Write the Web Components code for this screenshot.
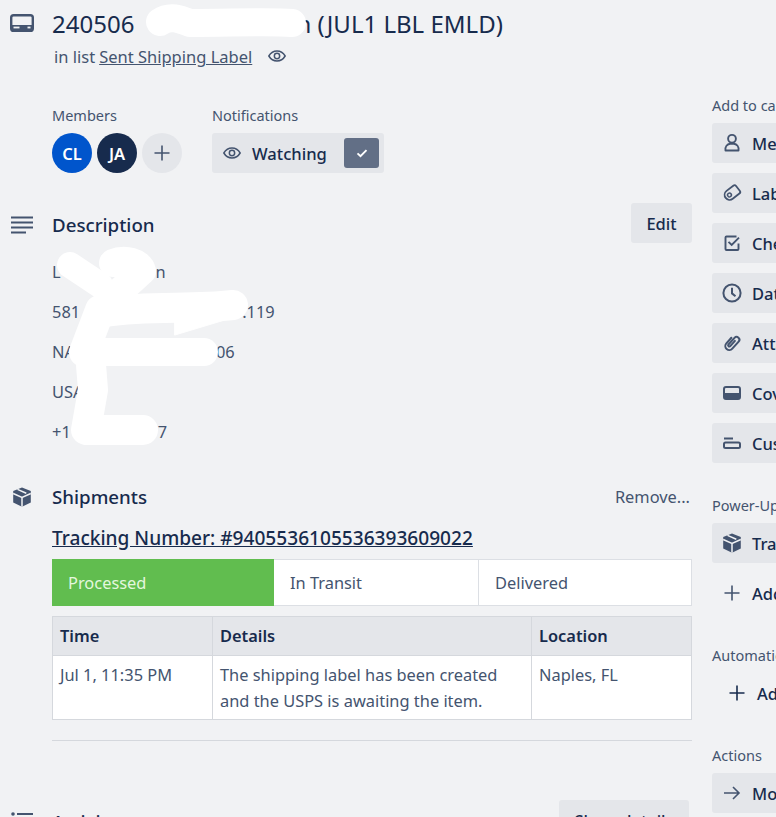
<!DOCTYPE html>
<html><head><meta charset="utf-8">
<style>
html,body{margin:0;padding:0;width:776px;height:817px;overflow:hidden;background:#f1f2f4;}
body{font-family:"Noto Sans","Open Sans","Liberation Sans",sans-serif;color:#172b4d;}
desc-block p{margin:0 0 20px;white-space:pre}
desc-block i{display:inline-block;width:var(--w)}
</style></head>
<body>
<card-window>
  <card-header slot="main"></card-header>
  <member-row slot="main"></member-row>
  <card-section slot="main" icon="lines" heading="Description" action="Edit" kind="button" style="--top:30px">
    <desc-block>
      <p>L<i style="--w:95px"></i>n</p>
      <p>581<i style="--w:162px"></i>.119</p>
      <p>NA<i style="--w:141px"></i>06</p>
      <p>USA</p>
      <p>+1<i style="--w:87px"></i>7</p>
    </desc-block>
  </card-section>
  <card-section slot="main" icon="box" heading="Shipments" action="Remove..." kind="text" style="--top:33px">
    <shipment-panel></shipment-panel>
  </card-section>
  <card-section slot="main" icon="activity" heading="Activity" action="Show details" kind="button" style="--top:59px;--bw:130px;--ar:3px"></card-section>

  <side-group slot="side" label="Add to card" style="--first:95px">
    <side-button icon="person">Members</side-button>
    <side-button icon="tag">Labels</side-button>
    <side-button icon="check">Checklist</side-button>
    <side-button icon="clock">Dates</side-button>
    <side-button icon="clip">Attachment</side-button>
    <side-button icon="cover">Cover</side-button>
    <side-button icon="field">Custom Fields</side-button>
  </side-group>
  <side-group slot="side" label="Power-Ups">
    <side-button icon="box">Tracking</side-button>
    <side-button icon="plus" plain>Add Power-Ups</side-button>
  </side-group>
  <side-group slot="side" label="Automation">
    <side-button icon="plus" plain indent>Add button</side-button>
  </side-group>
  <side-group slot="side" label="Actions">
    <side-button icon="arrow">Move</side-button>
  </side-group>
</card-window>
<redact-marks></redact-marks>

<script>
const ICONS={
  card:'<rect x="1.200" y="5.200" width="21.600" height="15.600" rx="2.400" fill="none" stroke="currentColor" stroke-width="2.400"/><path d="M2 15h20v4a2 2 0 0 1-2 2H4a2 2 0 0 1-2-2z" fill="currentColor"/><rect x="3.500" y="16.600" width="6" height="1.800" fill="#f1f2f4"/><rect x="17.500" y="16.600" width="3" height="1.800" fill="#f1f2f4"/>',
  eye:'<path d="M12 6C7.500 6 4 9 2.200 12 4 15 7.500 18 12 18s8-3 9.800-6C20 9 16.500 6 12 6z" fill="none" stroke="currentColor" stroke-width="1.800" stroke-linejoin="round"/><circle cx="12" cy="12" r="3.200" fill="none" stroke="currentColor" stroke-width="1.800"/>',
  plus:'<path d="M12 4.500v15M4.500 12h15" stroke="currentColor" stroke-width="1.600" fill="none"/>',
  lines:'<path d="M1 4.500h22M1 9.500h22M1 14.500h22M1 19.500h15" stroke="currentColor" stroke-width="2.200" fill="none"/>',
  box:'<path d="M12 2.500l8.800 3.400v11.600L12 21.800 3.200 17.500V6z" fill="currentColor"/><path d="M3.200 8.500l8.800 4 8.800-4M12 12.500v9.300M7.500 4.400l8.800 3.800" stroke="#f1f2f4" stroke-width="1.500" fill="none"/>',
  activity:'<circle cx="3" cy="4" r="1.800" fill="currentColor"/><path d="M7 4h16M7 9h16M7 14h16M7 19h16" stroke="currentColor" stroke-width="2.200" fill="none"/>',
  person:'<circle cx="12" cy="7.800" r="3.900" fill="none" stroke="currentColor" stroke-width="1.900"/><path d="M5.500 19.500c-.6-3.800 1.800-6.300 4.500-6.800h4c2.700.5 5.100 3 4.500 6.800z" fill="none" stroke="currentColor" stroke-width="1.900" stroke-linejoin="round"/>',
  tag:'<g transform="rotate(-38 12 12)" fill="none" stroke="currentColor"><path d="M9 7h8.500a2 2 0 0 1 2 2v6a2 2 0 0 1-2 2H9a5 5 0 0 1 0-10z" stroke-width="1.800" stroke-linejoin="round"/><circle cx="8.800" cy="12" r="1.900" stroke-width="1.500"/></g>',
  check:'<path d="M18.500 12.500V18a1 1 0 0 1-1 1H6.500a1 1 0 0 1-1-1V6.500a1 1 0 0 1 1-1h10" fill="none" stroke="currentColor" stroke-width="1.900"/><path d="M8.500 10.800l3.200 3.200 7.300-7.300" fill="none" stroke="currentColor" stroke-width="1.900"/>',
  clock:'<circle cx="12" cy="12" r="8.600" fill="none" stroke="currentColor" stroke-width="2"/><path d="M12 6.800V12.400l3.500 2.800" fill="none" stroke="currentColor" stroke-width="2"/>',
  clip:'<path d="M8 8.500v7.500a4 4 0 0 0 8 0V6.500a2.800 2.800 0 0 0-5.600 0V15.500a1.200 1.200 0 0 0 2.400 0V8.500" transform="rotate(42 12 12)" fill="none" stroke="currentColor" stroke-width="2" stroke-linecap="round"/>',
  cover:'<rect x="4" y="6" width="16" height="12" rx="2" fill="none" stroke="currentColor" stroke-width="2"/><path d="M4 12h16v4a2 2 0 0 1-2 2H6a2 2 0 0 1-2-2z" fill="currentColor"/>',
  field:'<path d="M4 7.500h9" stroke="currentColor" stroke-width="2" fill="none"/><rect x="4" y="11.500" width="16" height="5.500" rx="1.500" fill="none" stroke="currentColor" stroke-width="2"/>',
  arrow:'<path d="M4 12h15M13 6l6 6-6 6" fill="none" stroke="currentColor" stroke-width="1.600"/>',
  tick:'<path d="M6 12.500l4 3.700 8-8" fill="none" stroke="currentColor" stroke-width="2.600"/>'
};
function icon(n,s){return `<svg width="${s}" height="${s}" viewBox="0 0 24 24" aria-hidden="true" style="display:block;flex:none">${ICONS[n]}</svg>`;}
function def(name,css,html){
  customElements.define(name,class extends HTMLElement{
    constructor(){super();this.attachShadow({mode:'open'});}
    connectedCallback(){this.shadowRoot.innerHTML=`<style>${css}</style>`+(typeof html==='function'?html(this):html);}
  });
}
def('card-window',`:host{display:grid;grid-template-columns:640px 200px;column-gap:20px;padding:0 0 0 52px;width:1000px;}
 .m,.s{display:block;min-width:0}`,`<div class="m"><slot name="main"></slot></div><div class="s"><slot name="side"></slot></div>`);

def('card-header',`:host{display:block;position:relative;padding-top:8px}
 .ic{position:absolute;left:-42px;top:10px;color:#44546f}
 h1{margin:0;font-size:24px;line-height:32px;font-weight:400;display:flex;white-space:pre}
 h1 i{display:block;width:162px}
 .sub{display:flex;align-items:center;margin:7px 0 0 2px;font-size:16.500px;line-height:20px;color:#44546f}
 a{color:#44546f;text-decoration:underline;margin-left:4px}
 .eye{margin-left:15px;color:#44546f;position:relative;top:-1px}`,
 ()=>`<span class="ic">${icon('card',24)}</span><h1>240506<i></i>n (JUL1 LBL EMLD)</h1>
 <div class="sub">in list <a>Sent Shipping Label</a><span class="eye">${icon('eye',20)}</span></div>`);

def('member-row',`:host{display:flex;gap:30px;margin-top:38px}
 label{display:block;font-size:14.500px;line-height:20px;color:#44546f;margin-bottom:8px}
 .row{display:flex;gap:5px}
 .av{width:40px;height:40px;border-radius:50%;display:flex;align-items:center;justify-content:center;font-size:16.500px;font-weight:600;color:#fff}
 .cl{background:#0055cc}.ja{background:#172b4d}
 .add{background:#e4e6ea;color:#44546f}
 .watch{display:flex;align-items:center;height:40px;width:172px;background:#e4e6ea;border-radius:3px;box-sizing:border-box;padding:0 5px 0 10px;font-size:16.600px;font-weight:500}
 .watch span{margin-left:10px;flex:1}
 .e{color:#44546f}
 .box{width:35px;height:30px;border-radius:3px;background:#626f86;color:#fff;display:flex;align-items:center;justify-content:center}`,
 ()=>`<div><label>Members</label><div class="row"><div class="av cl">CL</div><div class="av ja">JA</div><div class="av add">${icon('plus',24)}</div></div></div>
 <div><label>Notifications</label><div class="watch"><div class="e">${icon('eye',20)}</div><span>Watching</span><div class="box">${icon('tick',18)}</div></div></div>`);

def('card-section',`:host{display:block;position:relative;margin-top:var(--top,30px)}
 .head{display:flex;align-items:center;justify-content:space-between;height:40px}
 h2{margin:0;font-size:18.700px;line-height:24px;font-weight:500;padding-top:4px}
 .ic{position:absolute;left:-42px;top:10px;color:#44546f}
 .btn{background:#e4e6ea;border-radius:3px;height:40px;width:var(--bw,61px);margin-right:var(--ar,0);display:flex;align-items:center;justify-content:center;font-size:16.500px;font-weight:500}
 .txt{font-size:16.400px;color:#44546f;margin-right:2px;padding-top:2px}`,
 h=>`<span class="ic">${icon(h.getAttribute('icon'),24)}</span><div class="head"><h2>${h.getAttribute('heading')}</h2><span class="${h.getAttribute('kind')==='button'?'btn':'txt'}">${h.getAttribute('action')}</span></div><slot></slot>`);

customElements.define('desc-block',class extends HTMLElement{
  constructor(){super();const r=this.attachShadow({mode:'open'});r.innerHTML=`<style>:host{display:block;margin-top:19px;font-size:16.400px;line-height:20px;color:#44546f}</style><slot></slot>`;}
});

def('shipment-panel',`:host{display:block;margin-top:11px}
 .track{font-size:19.100px;line-height:24px;font-weight:500;text-decoration:underline;display:block;height:34px}
 .bar{display:grid;grid-template-columns:222px 205px 213px;height:47px;box-sizing:border-box;background:#fff;border:1px solid #dcdfe4;border-left:0;font-size:16.400px;color:#44546f;margin-top:-1px}
 .bar>div{display:flex;align-items:center;padding-left:16px;box-sizing:border-box}
 .bar .on{background:#61bd4f;color:#e4f7de;margin:-1px 0;height:47px}
 .bar .mid{border-right:1px solid #dcdfe4}
 table{border-collapse:collapse;table-layout:fixed;width:639px;margin-top:10px;font-size:16.400px;line-height:26px;background:#fff;color:#44546f}
 th,td{border:1px solid #d5d8dd;padding:0 7px;text-align:left;vertical-align:top;box-sizing:border-box}
 th{background:#e4e6ea;color:#172b4d;font-weight:600;height:39px;vertical-align:middle}
 td{padding-top:6px;padding-bottom:5px}
 td.d{padding-right:24px}
 hr{border:0;border-top:1px solid #d5d8dd;margin:20px 0 0}`,
 `<span class="track">Tracking Number: #9405536105536393609022</span>
 <div class="bar"><div class="on">Processed</div><div class="mid">In Transit</div><div>Delivered</div></div>
 <table><colgroup><col style="width:160px"><col style="width:319px"><col style="width:160px"></colgroup>
 <tr><th>Time</th><th>Details</th><th>Location</th></tr>
 <tr><td>Jul 1, 11:35 PM</td><td class="d">The shipping label has been created and the USPS is awaiting the item.</td><td>Naples, FL</td></tr></table><hr>`);

def('side-group',`:host{display:block;padding-top:var(--first,32px)}
 label{display:block;font-size:14.500px;line-height:20px;color:#44546f;margin-bottom:8px}
 .l{display:flex;flex-direction:column;gap:10px}`,
 h=>`<label>${h.getAttribute('label')}</label><div class="l"><slot></slot></div>`);
def('side-button',`:host{display:flex;align-items:center;height:40px;width:168px;box-sizing:border-box;padding-left:8px;border-radius:3px;background:#e4e6ea;font-size:16.500px;font-weight:500;white-space:nowrap;color:#172b4d}
 :host([plain]){background:transparent}
 :host([indent]){padding-left:13px}
 .ic{margin-right:8px;color:#44546f}
 :host([indent]) .ic{color:#172b4d}`,
 h=>`<span class="ic">${icon(h.getAttribute('icon'),24)}</span><slot></slot>`);

def('redact-marks',`:host{position:absolute;left:0;top:0;width:776px;height:817px;pointer-events:none;display:block}
 svg{display:block}`,
 `<svg width="776" height="817" viewBox="0 0 776 817" fill="none" stroke="#fff" stroke-linecap="round" stroke-linejoin="round">
 <path d="M160 22C170 15 180 19 190 23C230 23 270 21 292 23" stroke-width="28"/>
 <path d="M70 265L100 285" stroke-width="26"/>
 <path d="M113 263C125 258 140 262 142 271L105 305" stroke-width="28"/>
 <path d="M105 312C150 305 190 310 233 305" stroke-width="30"/>
 <path d="M175 335L238 316L233 300L175 312Z" fill="#fff" stroke-width="1"/>
 <path d="M85 352L204 352" stroke-width="28"/>
 <path d="M100 310L84 352" stroke-width="30"/>
 <path d="M90 352L93 390L86 430L143 430" stroke-width="30"/>
 </svg>`);
</script>
</body></html>
